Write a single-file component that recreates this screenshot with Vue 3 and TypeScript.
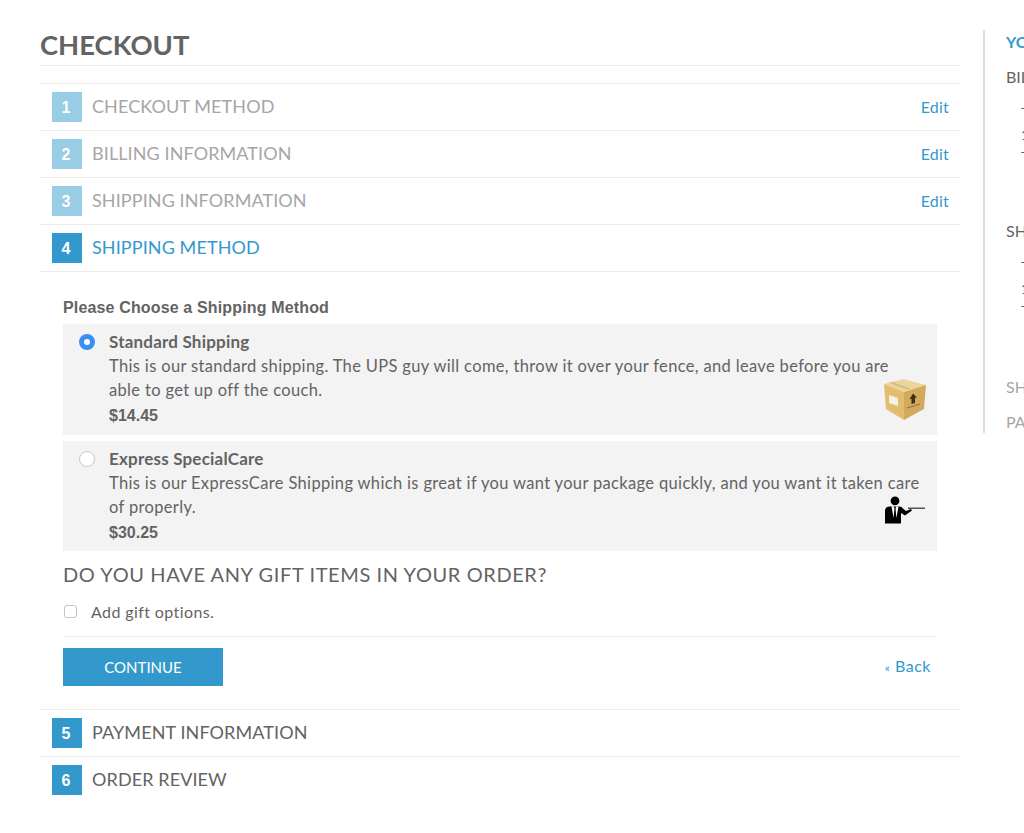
<template>
  <div class="page">
    <main class="checkout">
      <h1 class="title">CHECKOUT</h1>
      <ol class="steps">
        <li v-for="step in doneSteps" :key="step.num" class="step">
          <span class="badge faded">{{ step.num }}</span>
          <span class="step-name muted">{{ step.name }}</span>
          <a class="edit">Edit</a>
        </li>

        <li class="step">
          <span class="badge">4</span>
          <span class="step-name active">SHIPPING METHOD</span>
        </li>
        <li class="panel">
          <h4 class="choose">Please Choose a Shipping Method</h4>
          <div v-for="m in methods" :key="m.name" class="method">
            <span class="radio" :class="{ on: m.selected }"></span>
            <div class="method-body">
              <div class="method-name">{{ m.name }}</div>
              <div v-for="line in m.desc" :key="line" class="method-desc">{{ line }}</div>
              <div class="method-price">{{ m.price }}</div>
            </div>
            <svg v-if="m.icon === 'box'" class="method-icon box" viewBox="0 0 42 42">
              <path d="M0 5 L19 0 L42 6 L20 13 Z" fill="#ecd59c" />
              <path d="M0 5 L20 13 L20 41 L2 30 Z" fill="#e2bd70" />
              <path d="M20 13 L42 6 L40 30 L20 41 Z" fill="#d3a95c" />
              <path d="M5 3.7 L8 2.9 L27 9.8 L24 10.8 Z" fill="#d9bb7c" />
              <path d="M5 16 L14 19 L14 27 L5 24 Z" fill="#f3f0e8" />
              <path d="M29 14.5 L33 18.5 L31 18.8 L31 24 L27.5 25 L27.5 19.8 L25.5 20.2 Z" fill="#3d2f1a" />
              <path d="M23 29 L36 25" stroke="#8a6f3f" stroke-width="1" fill="none" />
            </svg>
            <svg v-else class="method-icon gun" viewBox="0 0 40 28">
              <circle cx="10" cy="4.8" r="4.4" fill="#000" />
              <path d="M0 27.5 L0 15 Q0 11 4 10.5 L15 10.5 Q17 10.8 18 12.5 L21 15 L26 13 L27 14.5 L20 19.5 L16 17 L16 27.5 Z" fill="#000" />
              <path d="M6.5 10.5 L9 10.5 L9.4 13 L8.6 22 Z M13.5 10.5 L11 10.5 L10.6 13 L11.4 22 Z" fill="#fff" />
              <rect x="23" y="11.5" width="17" height="1.5" fill="#555" />
            </svg>
          </div>

          <h3 class="gift-title">DO YOU HAVE ANY GIFT ITEMS IN YOUR ORDER?</h3>
          <label class="gift-check">
            <span class="checkbox"></span>
            <span>Add gift options.</span>
          </label>

          <div class="actions">
            <button class="continue">CONTINUE</button>
            <a class="back"><small>«</small> Back</a>
          </div>
        </li>

        <li v-for="step in nextSteps" :key="step.num" class="step">
          <span class="badge">{{ step.num }}</span>
          <span class="step-name">{{ step.name }}</span>
        </li>
      </ol>
    </main>

    <aside class="progress">
      <h3 class="progress-title">YOUR CHECKOUT PROGRESS</h3>
      <div class="progress-group">
        <div class="progress-head">BILLING ADDRESS</div>
        <div class="addr">
          <div>Tom Jones</div>
          <div>1 Main Street</div>
          <div>Tampa, FL</div>
        </div>
      </div>
      <div class="progress-group">
        <div class="progress-head">SHIPPING ADDRESS</div>
        <div class="addr">
          <div>Tom Jones</div>
          <div>1 Main Street</div>
          <div>Tampa, FL</div>
        </div>
      </div>
      <div class="progress-head muted next">SHIPPING METHOD</div>
      <div class="progress-head muted next">PAYMENT METHOD</div>
    </aside>
  </div>
</template>

<script setup lang="ts">
const doneSteps = [
  { num: 1, name: 'CHECKOUT METHOD' },
  { num: 2, name: 'BILLING INFORMATION' },
  { num: 3, name: 'SHIPPING INFORMATION' },
]

const nextSteps = [
  { num: 5, name: 'PAYMENT INFORMATION' },
  { num: 6, name: 'ORDER REVIEW' },
]

// desc is split by line, the wrap points are fixed in the design
const methods = [
  {
    name: 'Standard Shipping',
    desc: [
      'This is our standard shipping. The UPS guy will come, throw it over your fence, and leave before you are',
      'able to get up off the couch.',
    ],
    price: '$14.45',
    icon: 'box',
    selected: true,
  },
  {
    name: 'Express SpecialCare',
    desc: [
      'This is our ExpressCare Shipping which is great if you want your package quickly, and you want it taken care',
      'of properly.',
    ],
    price: '$30.25',
    icon: 'gun',
    selected: false,
  },
]
</script>

<style>
html,
body {
  overflow: hidden;
  background: #fff;
}
</style>

<style scoped>
.page {
  display: flex;
  width: 1200px;
  padding: 30px 0 0 40px;
  box-sizing: border-box;
  font-family: Lato, "Open Sans", sans-serif;
  color: #636363;
}

.checkout {
  width: 920px;
  flex: none;
}

.title {
  margin: 0 0 17px;
  height: 35px;
  line-height: 30px;
  font-size: 27.4px;
  font-weight: 700;
  color: #636363;
  border-bottom: 1px solid #ededed;
}

.steps {
  margin: 0;
  padding: 0;
  list-style: none;
  border-top: 1px solid #ededed;
}

.step {
  display: flex;
  align-items: center;
  height: 46px;
  padding-left: 12px;
  border-bottom: 1px solid #ededed;
}

.step:last-child {
  border-bottom: 0;
}

.badge {
  width: 30px;
  height: 30px;
  margin-right: 10px;
  padding: 1px 2px 0 0;
  box-sizing: border-box;
  display: flex;
  align-items: center;
  justify-content: center;
  background: #3399cc;
  color: #fff;
  font: 700 16px "Liberation Sans", sans-serif;
}

.badge.faded {
  background: #99cce5;
}

.step-name {
  flex: 1;
  padding-bottom: 2px;
  font-size: 18px;
  letter-spacing: 0.1px;
  color: #636363;
}

.step-name.muted {
  color: #a6a6a6;
}

.step-name.active {
  color: #3399cc;
}

.edit {
  margin-right: 11px;
  padding-bottom: 1px;
  font-size: 16px;
  letter-spacing: 0.2px;
  color: #3399cc;
}

.panel {
  padding: 26px 23px 23px;
  border-bottom: 1px solid #ededed;
}

.choose {
  margin: 0 0 6px;
  font: 700 16px/20px "Liberation Sans", sans-serif;
  letter-spacing: 0.15px;
  color: #636363;
}

.method {
  display: flex;
  position: relative;
  height: 111px;
  box-sizing: border-box;
  padding: 6px 14px 0 16px;
  margin-bottom: 6px;
  background: #f3f3f3;
}

.method + .method {
  height: 110px;
  margin-bottom: 5px;
}

.method-body {
  flex: 1;
  font-size: 16.5px;
  line-height: 24px;
  white-space: nowrap;
}

.method-name {
  font-size: 17px;
  font-weight: 700;
  letter-spacing: 0.2px;
}

.method-desc {
  letter-spacing: 0.34px;
}

.method-price {
  font: 700 16px/26px "Liberation Sans", sans-serif;
  padding-top: 1px;
}

.radio {
  flex: none;
  width: 16px;
  height: 16px;
  box-sizing: border-box;
  margin: 4px 14px 0 0;
  border: 1px solid #c8c8c8;
  border-radius: 50%;
  background: #fff;
}

.radio.on {
  border: 5px solid #3a8ff5;
}

.method-icon {
  position: absolute;
}

.method-icon.box {
  right: 11px;
  top: 55px;
  width: 42px;
  height: 42px;
}

.method-icon.gun {
  right: 12px;
  top: 55px;
  width: 40px;
  height: 28px;
}

.gift-title {
  margin: 11px 0 15px;
  font-size: 20px;
  line-height: 24px;
  font-weight: 400;
  letter-spacing: 0.6px;
  color: #636363;
}

.gift-check {
  display: flex;
  align-items: center;
  height: 20px;
  font-size: 16px;
  letter-spacing: 0.4px;
}

.checkbox {
  width: 13px;
  height: 13px;
  box-sizing: border-box;
  margin: 0 14px 0 1px;
  border: 1px solid #c4c4c4;
  border-radius: 3px;
  background: #fff;
}

.actions {
  display: flex;
  align-items: center;
  justify-content: space-between;
  margin-top: 15px;
  padding: 11px 6px 0 0;
  border-top: 1px solid #ededed;
}

.continue {
  width: 160px;
  height: 38px;
  padding-bottom: 2px;
  border: 0;
  background: #3399cc;
  color: #fff;
  font-family: inherit;
  font-size: 15px;
}

.back {
  margin-bottom: 4px;
  font-size: 16px;
  letter-spacing: 0.5px;
  color: #3399cc;
}

.back small {
  font-size: 12px;
}

.progress {
  flex: none;
  width: 260px;
  height: 403px;
  margin-left: 23px;
  padding-left: 21px;
  border-left: 2px solid #ddd;
  white-space: nowrap;
}

.progress-title {
  margin: 3px 0 16px;
  font-size: 16px;
  line-height: 18px;
  font-weight: 700;
  color: #3399cc;
}

.progress-head {
  font-size: 16px;
  line-height: 20px;
}

.progress-head.muted {
  color: #a6a6a6;
}

.progress-head.next {
  margin-bottom: 15px;
}

.progress-group {
  height: 155px;
}

.progress-group:first-of-type {
  height: 154px;
}

.progress-group + .progress-group {
  height: 156px;
}

.addr {
  margin: 15px 0 0 15px;
  font-size: 14px;
  line-height: 22px;
}
</style>
